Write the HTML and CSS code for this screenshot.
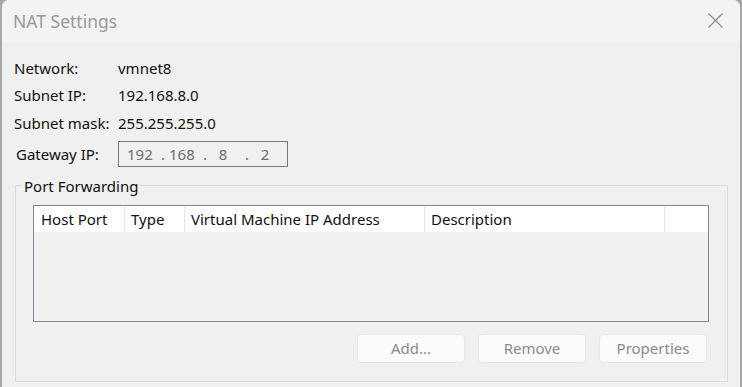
FILE: index.html
```html
<!DOCTYPE html>
<html lang="en">
<head>
    <meta charset="UTF-8">
    <title>NAT Settings</title>
    <link rel="stylesheet" href="styles.css">
</head>
<body>
    <div class="screen">
        <div class="dialog">
            <div class="titlebar">
                <span class="title">NAT Settings</span>
                <svg class="close" width="15" height="15" viewBox="0 0 15 15">
                    <path d="M0.5 0.5 L14.5 14.5 M14.5 0.5 L0.5 14.5" stroke="#8c8c8c" stroke-width="1.1" fill="none"/>
                </svg>
            </div>

            <div class="content">
                <div class="info">
                    <span>Network:</span><span>vmnet8</span>
                    <span>Subnet IP:</span><span>192.168.8.0</span>
                    <span>Subnet mask:</span><span>255.255.255.0</span>
                </div>

                <div class="gateway">
                    <span class="gateway-label">Gateway IP:</span>
                    <div class="ipbox">
                        <span class="octet">192</span><span class="dot">.</span>
                        <span class="octet">168</span><span class="dot">.</span>
                        <span class="octet">8</span><span class="dot">.</span>
                        <span class="octet">2</span>
                    </div>
                </div>

                <fieldset class="group">
                    <legend>Port Forwarding</legend>
                    <div class="list">
                        <div class="list-head">
                            <div class="col col-port">Host Port</div>
                            <div class="col col-type">Type</div>
                            <div class="col col-ip">Virtual Machine IP Address</div>
                            <div class="col col-desc">Description</div>
                            <div class="col col-fill"></div>
                        </div>
                    </div>
                    <div class="buttons">
                        <button disabled>Add...</button>
                        <button disabled>Remove</button>
                        <button disabled>Properties</button>
                    </div>
                </fieldset>
            </div>
        </div>
    </div>
</body>
</html>
```

FILE: styles.css
```css
body {
    margin: 0;
    background-color: #a8a8a8;
    font-family: 'Noto Sans', 'Liberation Sans', sans-serif;
    font-size: 15px;
    color: #111111;
    overflow: hidden;
}

.screen {
    display: flex;
    height: 387px;
    padding-left: 2px;
}

.dialog {
    width: 738px;
    background-color: #f0f0f0;
    border-radius: 7px 7px 0 0;
    overflow: hidden;
    display: flex;
    flex-direction: column;
}

.titlebar {
    height: 43px;
    background-color: #f3f3f3;
    display: flex;
    align-items: center;
    justify-content: space-between;
    padding: 0 17px 2px 11px;
    box-sizing: border-box;
}

.title {
    font-size: 17.5px;
    color: #9a9a9a;
}

.close {
    display: block;
}

.content {
    padding: 11px 0 0 12px;
}

.info {
    display: grid;
    grid-template-columns: 104px auto;
    grid-auto-rows: 27.5px;
    align-items: center;
}

.gateway {
    display: flex;
    align-items: center;
    margin-top: 4px;
}

.gateway-label {
    width: 102px;
    padding-left: 2px;
}

.ipbox {
    width: 170px;
    height: 26px;
    box-sizing: border-box;
    border: 1px solid #7a7a7a;
    color: #6d6d6d;
    display: flex;
    align-items: center;
    padding-left: 8px;
}

.octet {
    width: 24px;
    text-align: center;
}

.dot {
    width: 12px;
    padding-left: 6px;
    text-align: center;
}

.group {
    margin: 9px 0 0 1px;
    width: 713px;
    box-sizing: border-box;
    border: 1px solid #dcdcdc;
    padding: 9px 18px 18px 17px;
    min-inline-size: 0;
}

.group legend {
    padding: 0 2px;
    margin-left: -11px;
    line-height: 20px;
}

.list {
    height: 117px;
    box-sizing: border-box;
    border: 1px solid #828790;
    background-color: #f0f0f0;
}

.list-head {
    display: flex;
    height: 26px;
    background-color: #ffffff;
}

.col {
    box-sizing: border-box;
    border-right: 1px solid #e5e5e5;
    padding-left: 6px;
    line-height: 26px;
    white-space: nowrap;
}

.col-port {
    width: 91px;
    padding-left: 7px;
}

.col-type { width: 60px; }
.col-ip { width: 240px; }
.col-desc { width: 240px; }

.col-fill {
    flex: 1;
    border-right: none;
}

.buttons {
    display: flex;
    justify-content: flex-end;
    gap: 13px;
    margin-top: 12px;
    padding-right: 2px;
}

.buttons button {
    width: 108px;
    height: 29px;
    background-color: #fbfbfb;
    border: 1px solid #e6e6e6;
    border-radius: 4px;
    color: #8a8a8a;
    font-family: 'Noto Sans', 'Liberation Sans', sans-serif;
    font-size: 15px;
    padding: 0;
}
```
